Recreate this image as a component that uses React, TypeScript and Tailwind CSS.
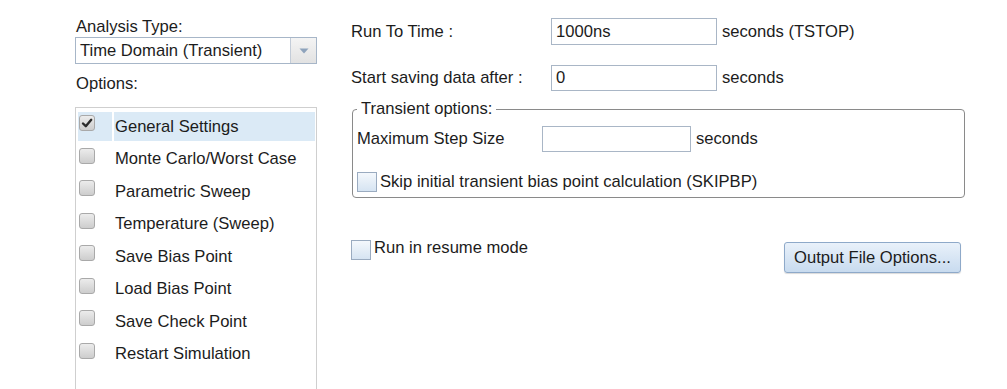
import React from "react";

const options = [
  { label: "General Settings", checked: true, active: true },
  { label: "Monte Carlo/Worst Case" },
  { label: "Parametric Sweep" },
  { label: "Temperature (Sweep)" },
  { label: "Save Bias Point" },
  { label: "Load Bias Point" },
  { label: "Save Check Point" },
  { label: "Restart Simulation" },
];

function GrayCheck({ checked }: { checked?: boolean }) {
  return (
    <div className="w-[16px] h-[16px] rounded-[3px] border border-[#a9a9a9] bg-gradient-to-b from-[#ececec] to-[#cdcdcd] flex items-center justify-center">
      {checked && (
        <svg width="12" height="12" viewBox="0 0 12 12">
          <path d="M2 6.5 L4.8 9.2 L10.2 2.8" fill="none" stroke="#2b2b2b" strokeWidth="2.4" strokeLinecap="round" strokeLinejoin="round" />
        </svg>
      )}
    </div>
  );
}

function BlueCheck() {
  return <div className="w-[20px] h-[20px] shrink-0 border border-[#9aabc0] bg-gradient-to-b from-[#f4f8fc] to-[#d6e4f2]" />;
}

function TextBox({ value, w, h }: { value?: string; w: string; h: string }) {
  return (
    <div className={`${w} ${h} border border-[#a9b6c6] bg-white flex items-center pl-[4px] shrink-0`}>
      {value}
    </div>
  );
}

export default function App() {
  return (
    <div
      className="w-[1007px] h-[389px] bg-white overflow-hidden flex items-start text-[16.6px] leading-[18px] text-[#1c1c1c]"
      style={{ fontFamily: '"Liberation Sans", Arial, sans-serif' }}
    >
      {/* left column */}
      <div className="ml-[75px] w-[242px] flex flex-col">
        <div className="pt-[18px] pl-[1px] shrink-0">Analysis Type:</div>
        <div className="mt-[1px] h-[27px] shrink-0 border border-[#a7b6c8] flex">
          <div className="flex-1 flex items-center pl-[4px]">Time Domain (Transient)</div>
          <div className="w-[26px] border-l border-[#c3ccd8] bg-gradient-to-b from-[#f4f4f4] to-[#e2e2e2] flex items-center justify-center">
            <svg width="10" height="6" viewBox="0 0 10 6">
              <path d="M0.5 0.5 L9.5 0.5 L5 5.5 Z" fill="#8ea3bc" />
            </svg>
          </div>
        </div>
        <div className="mt-[11px] pl-[1px] shrink-0">Options:</div>
        <div className="mt-[14px] h-[330px] shrink-0 border border-[#cfcfcf] pt-[1px] pl-[2px] pr-[1px]">
          {options.map((o) => (
            <div key={o.label} className="h-[32.57px] flex items-start pt-[3px] gap-[2px]">
              <div className={`w-[34px] h-[29px] pt-[3px] pl-[1px] ${o.active ? "bg-[#dbeaf6]" : ""}`}>
                <GrayCheck checked={o.checked} />
              </div>
              <div className={`flex-1 h-[29px] flex items-center pl-[1px] ${o.active ? "bg-[#dbeaf6]" : ""}`}>
                {o.label}
              </div>
            </div>
          ))}
        </div>
      </div>

      {/* right column */}
      <div className="ml-[34px] w-[614px] flex flex-col">
        <div className="mt-[18px] h-[27px] flex items-center">
          <div className="w-[200px]">Run To Time :</div>
          <TextBox value="1000ns" w="w-[166px]" h="h-[27px]" />
          <div className="ml-[5px]">seconds (TSTOP)</div>
        </div>
        <div className="mt-[20px] h-[26px] flex items-center">
          <div className="w-[200px]">Start saving data after :</div>
          <TextBox value="0" w="w-[166px]" h="h-[26px]" />
          <div className="ml-[5px]">seconds</div>
        </div>

        <fieldset className="mt-[9px] ml-[1px] w-[613px] border border-[#8a8a8a] rounded-[4px] pl-[4px] pb-[5px]">
          <legend className="px-[4px] leading-[18px]">Transient options:</legend>
          <div className="mt-[8px] h-[26px] flex items-center">
            <div className="w-[185px]">Maximum Step Size</div>
            <TextBox w="w-[149px]" h="h-[26px]" />
            <div className="ml-[5px]">seconds</div>
          </div>
          <div className="mt-[19px] h-[21px] flex items-center gap-[3px]">
            <BlueCheck />
            <div>Skip initial transient bias point calculation (SKIPBP)</div>
          </div>
        </fieldset>

        <div className="mt-[42px] flex items-start justify-between">
          <div className="flex items-center gap-[3px]">
            <BlueCheck />
            <div className="-mt-[4px]">Run in resume mode</div>
          </div>
          <button className="mt-[2px] mr-[4px] w-[177px] h-[31px] rounded-[3px] border border-[#8ea9c9] bg-gradient-to-b from-[#e9f1fa] to-[#c8dbef] shadow-[0_1px_1px_rgba(0,0,0,0.15)] text-[#1c1c1c]">
            Output File Options...
          </button>
        </div>
      </div>
    </div>
  );
}
